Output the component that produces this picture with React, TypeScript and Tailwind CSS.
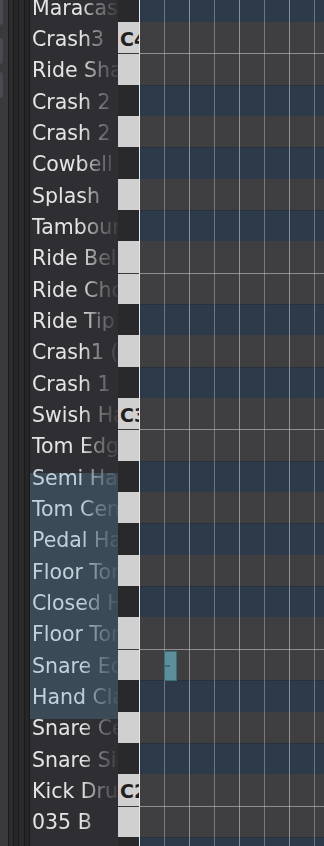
const ROW = 31.35

const NAMES = [
  'Maracas',
  'Crash3',
  'Ride Shaft',
  'Crash 2',
  'Crash 2',
  'Cowbell',
  'Splash',
  'Tambourine',
  'Ride Bell',
  'Ride Choke',
  'Ride Tip',
  'Crash1 (Choke)',
  'Crash 1',
  'Swish Hat',
  'Tom Edge',
  'Semi Hat',
  'Tom Center',
  'Pedal Hat',
  'Floor Tom',
  'Closed Hat',
  'Floor Tom',
  'Snare Edge',
  'Hand Clap',
  'Snare Center',
  'Snare Side',
  'Kick Drum',
  '035 B',
  '',
]

const BLACK = [1, 3, 6, 8, 10]
// row 0 is C#4, going down one semitone per row
const rows = NAMES.map((name, i) => {
  const note = (((1 - i) % 12) + 12) % 12
  return {
    name,
    black: BLACK.includes(note),
    split: note === 11 || note === 4,
    label: note === 0 ? 'C' + (4 - Math.floor((i - 1) / 12)) : '',
  }
})

function LeftStrip() {
  return (
    <div className="flex h-full w-[30px] shrink-0">
      <div className="flex h-full w-[8px] flex-col bg-[#3a3a3e]">
        <div className="h-[25px] w-[3px] rounded-br-[3px] bg-[#4a4950]" />
        <div className="mt-[13px] h-[26px] w-[3px] rounded-r-[3px] bg-[#4a4950]" />
        <div className="mt-[8px] h-[26px] w-[3px] rounded-r-[3px] bg-[#4a4950]" />
      </div>
      <div className="w-[1px] bg-[#1c1c1e]" />
      <div className="w-[4px] bg-[#2c2c2e]" />
      <div className="w-[1px] bg-[#1a1a1b]" />
      <div className="w-[4px] bg-[#262628]" />
      <div className="w-[1px] bg-[#1a1a1b]" />
      <div className="w-[5px] bg-[#2a2a2c]" />
      <div className="w-[1px] bg-[#1a1a1b]" />
      <div className="w-[4px] bg-[#262628]" />
      <div className="w-[1px] bg-[#1a1a1b]" />
    </div>
  )
}

function Names() {
  return (
    <div className="relative h-full w-[88px] shrink-0 overflow-hidden bg-[#2f2e33]">
      <div className="absolute left-0 top-[473px] h-[246px] w-full bg-[#3b4a57]" />
      <div className="relative mt-[-9.4px]">
        {rows.map((r, i) => (
          <div
            key={i}
            style={{ height: ROW }}
            className="flex items-center overflow-hidden whitespace-nowrap pl-[2px] pt-[3px]"
          >
            <span
              className={
                'text-[20.5px] leading-none [mask-image:linear-gradient(to_right,black_50px,rgba(0,0,0,0.45)_66px,rgba(0,0,0,0.08)_86px)] ' +
                (i >= 15 && i <= 22 ? 'text-[#c2d2da]' : 'text-[#e4e4e4]')
              }
              style={{ fontFamily: '"DejaVu Sans", sans-serif' }}
            >
              {r.name}
            </span>
          </div>
        ))}
      </div>
    </div>
  )
}

function Keys() {
  return (
    <div className="h-full w-[21px] shrink-0 overflow-hidden">
      <div className="mt-[-9.4px]">
        {rows.map((r, i) => (
          <div
            key={i}
            style={{ height: ROW }}
            className={
              'flex items-center overflow-hidden whitespace-nowrap pl-[2px] pt-[3px] ' +
              (r.black
                ? 'bg-[#29292c]'
                : r.split
                  ? 'border-t border-[#3c3c3e] bg-[#d0d0d0]'
                  : 'bg-[#d0d0d0]')
            }
          >
            <span
              className="text-[19px] font-bold leading-none text-[#1f1f21]"
              style={{ fontFamily: '"DejaVu Sans", sans-serif' }}
            >
              {r.label}
            </span>
          </div>
        ))}
      </div>
    </div>
  )
}

function Grid() {
  return (
    <div className="relative h-full flex-1 overflow-hidden">
      <div className="mt-[-9.4px]">
        {rows.map((r, i) => (
          <div
            key={i}
            style={{ height: ROW }}
            className={
              r.black
                ? 'border-t border-[#27303b] bg-[#2d3a4a]'
                : r.split
                  ? 'border-t border-[#8e8e90] bg-[#3f3f41]'
                  : 'bg-[#3f3f41]'
            }
          />
        ))}
      </div>
      <div className="absolute inset-0 bg-[repeating-linear-gradient(to_right,transparent_0_24px,rgba(200,200,205,0.42)_24px_25px,transparent_25px_49px,rgba(210,210,215,0.55)_49px_50px)]" />
      <div className="absolute left-[24px] top-[651px] flex h-[30px] w-[13px] items-center border border-[#3d6d79] bg-[#5b8f9b]">
        <div className="h-[2px] w-[5px] bg-[#3d6d79]" />
      </div>
    </div>
  )
}

export default function App() {
  return (
    <div className="flex h-[846px] w-[324px] overflow-hidden bg-[#2f2e33]">
      <LeftStrip />
      <Names />
      <Keys />
      <div className="w-[1px] shrink-0 bg-[#e6e6e6]" />
      <Grid />
    </div>
  )
}
